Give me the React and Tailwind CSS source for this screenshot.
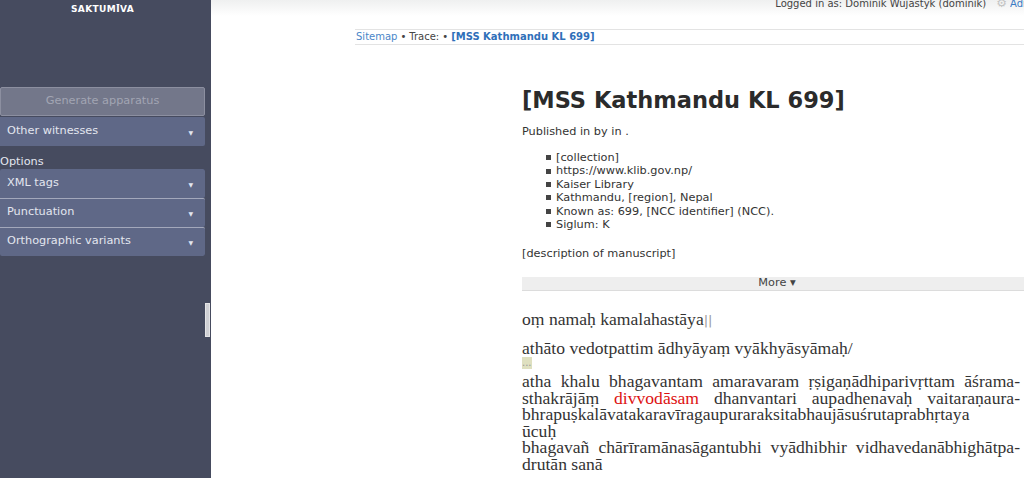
import React from 'react';

const sans = { fontFamily: '"DejaVu Sans", Verdana, sans-serif' };
const serif = { fontFamily: '"Liberation Serif", "DejaVu Serif", serif' };

const SideItem = ({ label, border = false }) => (
  <div
    className={`flex items-center justify-between h-[29px] px-[7px] bg-[#5f6887] text-[#e3e6ef] text-[11.3px] ${border ? 'border-t border-[#a3a8bb]' : ''} rounded-r-[2px]`}
  >
    <span>{label}</span>
    <span className="text-[6px] mr-[5px] mt-[2px]">▼</span>
  </div>
);

const Sidebar = () => (
  <aside className="w-[211px] shrink-0 bg-[#464b5f] flex min-h-[478px]">
    <div className="w-[205px]">
      <div className="text-center text-white font-bold text-[9px] tracking-[0.4px] pt-[3px]">SAKTUMĪVA</div>
      <div className="mt-[70px] h-[29px] flex items-center justify-center bg-[#73778a] border border-[#8c8fa0] rounded-[2px] text-[#a2a5b3] text-[11.3px]">
        Generate apparatus
      </div>
      <div className="mt-[1px]">
        <SideItem label="Other witnesses" />
      </div>
      <div className="text-[#e3e6ef] text-[11.3px] mt-[8px] leading-[15px]">Options</div>
      <div className="rounded-[2px] overflow-hidden">
        <SideItem label="XML tags" />
        <SideItem label="Punctuation" border />
        <SideItem label="Orthographic variants" border />
      </div>
    </div>
    <div className="w-[6px]">
      <div className="mt-[303px] h-[34px] w-[5px] bg-[#cfd0d4] border border-[#e4e4e6]"></div>
    </div>
  </aside>
);

// justified line of the edition text (ends with a hyphen)
const JLine = ({ children }) => (
  <div className="w-[498px] text-justify [text-align-last:justify]">{children}</div>
);

const Main = () => (
  <main className="flex-1 bg-white overflow-hidden" style={sans}>
    <div className="h-[16px] bg-gradient-to-b from-[#eff0f0] to-white flex justify-end items-start overflow-hidden">
      <div className="-mt-[6px] flex items-center text-[10px] text-[#444] whitespace-nowrap">
        <span>Logged in as: Dominik Wujastyk (dominik)</span>
        <span className="ml-[10px] text-[#c4c4c4] text-[12px]">⚙</span>
        <span className="ml-[3px] text-[#3b7bc4] w-[14px] overflow-hidden">Admin</span>
      </div>
    </div>
    <div className="ml-[144px] mt-[13px] border-t border-b border-[#e3e3e3] h-[16px] flex items-center text-[10px] text-[#444] leading-none whitespace-nowrap">
      <span className="ml-[1px] text-[#4a86c8]">Sitemap</span>
      <span className="mx-[3px]">•</span>
      <span>Trace:</span>
      <span className="mx-[3px]">•</span>
      <span className="text-[#2f6fb9] font-bold">[MSS Kathmandu KL 699]</span>
    </div>
    <div className="ml-[311px] text-[#333]">
      <h1 className="mt-[40px] text-[22.5px] font-bold leading-[30px] text-[#2b2b2b]">[MSS Kathmandu KL 699]</h1>
      <p className="mt-[10px] text-[11.3px] leading-[14px]">Published in by in .</p>
      <ul className="mt-[12px] ml-[24px] text-[11.3px] leading-[13.4px] list-none">
        {['[collection]', 'https://www.klib.gov.np/', 'Kaiser Library', 'Kathmandu, [region], Nepal', 'Known as: 699, [NCC identifier] (NCC).', 'Siglum: K'].map((t) => (
          <li key={t} className="flex items-center">
            <span className="w-[5px] h-[5px] bg-[#444] mr-[5px]"></span>
            {t}
          </li>
        ))}
      </ul>
      <p className="mt-[16px] text-[11.3px] leading-[14px]">[description of manuscript]</p>
      <div className="mt-[16px] h-[14px] bg-[#eeeeee] border-b border-[#dcdcdc] flex items-center justify-center text-[11.3px] text-[#444] whitespace-nowrap w-[510px]">
        More ▾
      </div>
      <div className="mt-[20px] text-[17.6px] text-[#333] leading-[16.5px] whitespace-nowrap" style={serif}>
        <p>oṃ namaḥ kamalahastāya<span className="text-[#999] text-[13px]" style={sans}>||</span></p>
        <p className="mt-[10px]">athāto vedotpattim ādhyāyaṃ vyākhyāsyāmaḥ/</p>
        <div className="mt-[1px] h-[16px]"><span className="bg-[#dfe0c0] text-[#999] text-[10px] leading-[12px] inline-block align-top" style={sans}>...</span></div>
        <JLine>atha khalu bhagavantam amaravaram ṛṣigaṇādhiparivṛttam āśrama-</JLine>
        <JLine>sthakrājāṃ <span className="text-[#d11]">divvodāsam</span> dhanvantari aupadhenavaḥ vaitaraṇaura-</JLine>
        <div>bhrapuṣkalāvatakaravīragaupuraraksitabhaujāsuśrutaprabhṛtaya</div>
        <div>ūcuḥ</div>
        <JLine>bhagavañ chārīramānasāgantubhi vyādhibhir vidhavedanābhighātpa-</JLine>
        <div>drutān sanā</div>
      </div>
    </div>
  </main>
);

export default function App() {
  return (
    <div className="flex w-[1024px] h-[478px] overflow-hidden" style={sans}>
      <Sidebar />
      <Main />
    </div>
  );
}
